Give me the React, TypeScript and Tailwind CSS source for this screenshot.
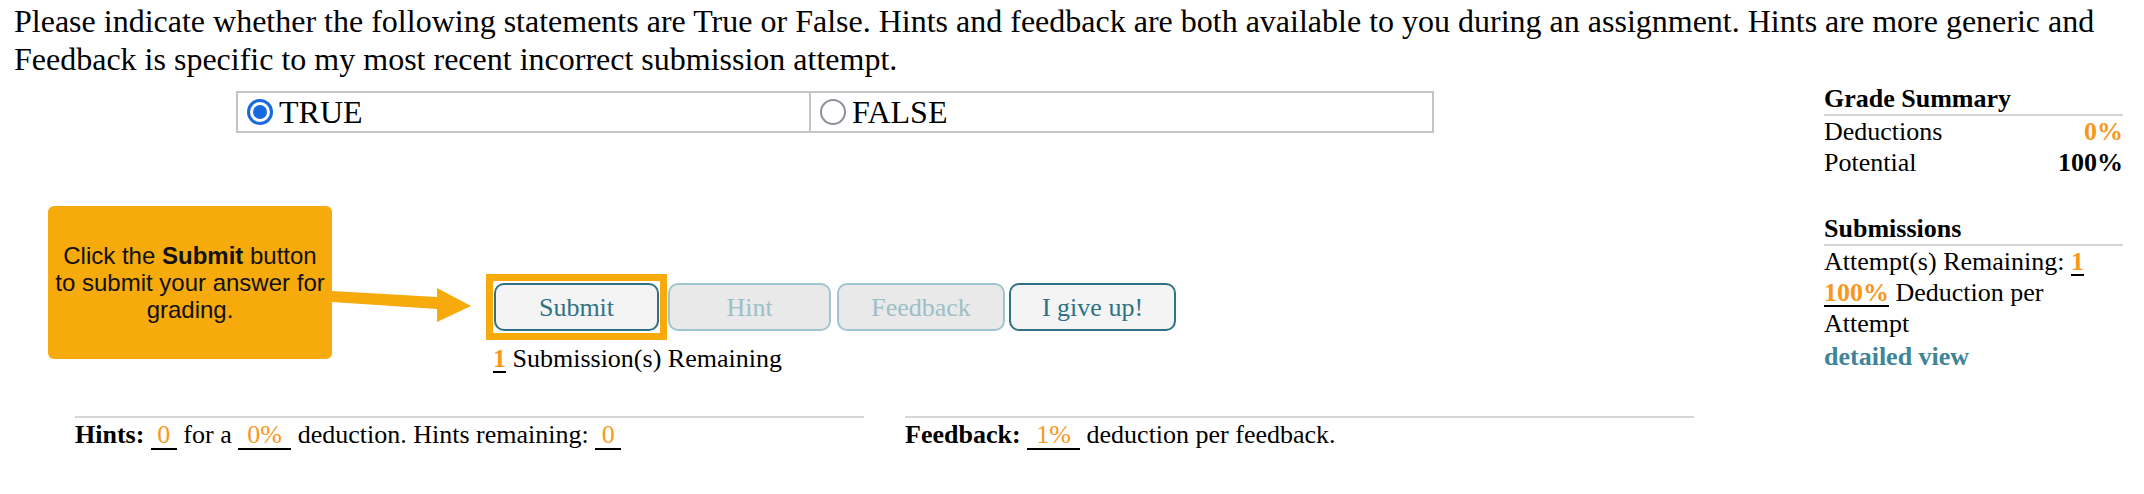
import React from 'react';

function Radio({ checked }: { checked: boolean }) {
  if (checked) {
    return (
      <span className="w-[26px] h-[26px] rounded-full border-[3px] border-[#1769e0] bg-white flex items-center justify-center shrink-0">
        <span className="w-[14px] h-[14px] rounded-full bg-[#1769e0]" />
      </span>
    );
  }
  return <span className="w-[26px] h-[26px] rounded-full border-2 border-[#8f8f9d] bg-white shrink-0" />;
}

function Blank({ w, children }: { w: string; children: React.ReactNode }) {
  return (
    <span className={`inline-block ${w} text-center border-b-2 border-black leading-[26px] text-[#f7981d]`}>
      {children}
    </span>
  );
}

export default function App() {
  return (
    <div className="w-[2144px] h-[494px] bg-white text-black font-['Liberation_Serif','Times_New_Roman',serif] overflow-hidden">
      <p className="pl-[14px] pr-[20px] pt-[2px] text-[32px] leading-[38px]">
        Please indicate whether the following statements are True or False. Hints and feedback are both available to you during an assignment. Hints are more generic and Feedback is specific to my most recent incorrect submission attempt.
      </p>

      <div className="flex">
        {/* Main column */}
        <div className="w-[1824px] shrink-0">
          <div className="mt-[13px] ml-[236px] flex w-[1198px] h-[42px] border-2 border-[#c4c4c4] text-[32px] leading-[38px]">
            <label className="w-[571px] flex items-center gap-[6px] pl-[9px]">
              <Radio checked />
              <span>TRUE</span>
            </label>
            <label className="flex-1 flex items-center gap-[6px] pl-[9px] border-l-2 border-[#c4c4c4]">
              <Radio checked={false} />
              <span>FALSE</span>
            </label>
          </div>

          <div className="flex items-start">
            {/* Tutorial callout */}
            <div className="mt-[73px] ml-[48px] w-[284px] h-[153px] shrink-0 rounded-[6px] bg-[#f6aa0b] flex items-center justify-center text-center font-['Liberation_Sans',Arial,sans-serif] text-[24px] leading-[27px] text-[#111]">
              <p>
                Click the <b>Submit</b> button
                <br />
                to submit your answer for
                <br />
                grading.
              </p>
            </div>
            <svg className="mt-[147px] shrink-0" width="154" height="45" viewBox="0 0 154 45">
              <polygon points="0,11 105,17 105,8 139,26 105,42 105,29 0,22" fill="#f6aa0b" />
            </svg>

            {/* Buttons */}
            <div className="mt-[141px]">
              <div className="flex items-center text-[26px]">
                <div className="border-[7px] border-[#f6aa0b] px-[1px] py-[2px]">
                  <button className="w-[165px] h-[48px] rounded-[10px] border-2 border-[#2f7285] bg-[#f4f4f4] text-[#2f7285]">
                    Submit
                  </button>
                </div>
                <button className="ml-[1px] w-[163px] h-[48px] rounded-[10px] border-2 border-[#a0c5ce] bg-[#e9e9e9] text-[#9cc0c8]">
                  Hint
                </button>
                <button className="ml-[6px] w-[168px] h-[48px] rounded-[10px] border-2 border-[#a0c5ce] bg-[#e9e9e9] text-[#9cc0c8]">
                  Feedback
                </button>
                <button className="ml-[4px] w-[167px] h-[48px] rounded-[10px] border-2 border-[#2f7285] bg-[#f4f4f4] text-[#2f7285]">
                  I give up!
                </button>
              </div>
              <div className="mt-[3px] pl-[7px] text-[26px] leading-[31px]">
                <span className="font-bold text-[#f7981d] underline decoration-black decoration-2 underline-offset-[4px]">1</span> Submission(s) Remaining
              </div>
            </div>
          </div>

          {/* Hints / Feedback */}
          <div className="mt-[42px] ml-[75px] flex gap-[41px] text-[26px] leading-[31px]">
            <div className="w-[789px] border-t-2 border-[#d6d6d6] pt-[1px]">
              <b>Hints:</b> <Blank w="w-[26px]">0</Blank> for a <Blank w="w-[53px]">0%</Blank> deduction. Hints remaining: <Blank w="w-[26px]">0</Blank>
            </div>
            <div className="w-[789px] border-t-2 border-[#d6d6d6] pt-[1px]">
              <b>Feedback:</b> <Blank w="w-[53px]">1%</Blank> deduction per feedback.
            </div>
          </div>
        </div>

        {/* Right column */}
        <div className="mt-[5px] w-[299px] shrink-0 text-[26px] leading-[31px]">
          <div className="font-bold border-b-2 border-[#d4d4d4]">Grade Summary</div>
          <div className="flex justify-between">
            <span>Deductions</span>
            <span className="font-bold text-[#f7981d]">0%</span>
          </div>
          <div className="flex justify-between">
            <span>Potential</span>
            <span className="font-bold">100%</span>
          </div>

          <div className="mt-[35px] font-bold border-b-2 border-[#d4d4d4]">Submissions</div>
          <div>
            Attempt(s) Remaining:{' '}
            <span className="font-bold text-[#f7981d] underline decoration-black decoration-2 underline-offset-[4px]">1</span>
          </div>
          <div>
            <span className="font-bold text-[#f7981d] underline decoration-black decoration-2 underline-offset-[4px]">100%</span> Deduction per Attempt
          </div>
          <a className="block mt-[2px] font-bold text-[#3e8597]">detailed view</a>
        </div>
      </div>
    </div>
  );
}
